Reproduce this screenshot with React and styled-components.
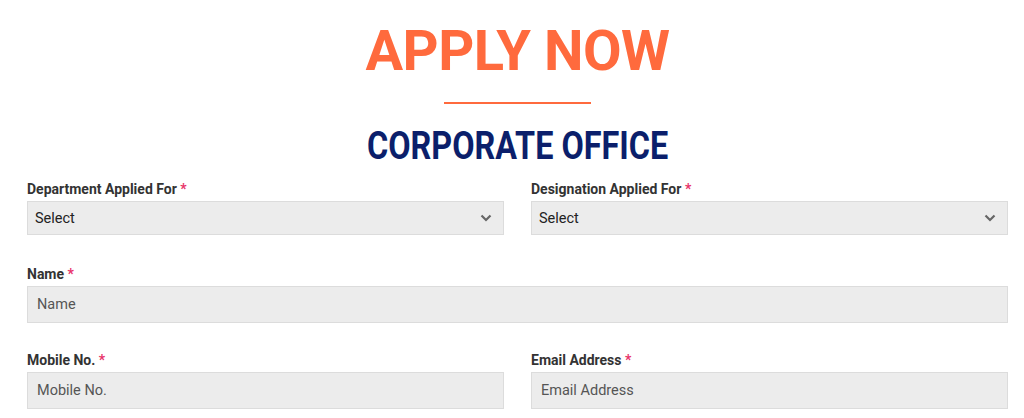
import React from "react";
import styled, { createGlobalStyle } from "styled-components";

const Global = createGlobalStyle`
  html, body { margin: 0; padding: 0; background: #fff; }
  body { font-family: Roboto, "Liberation Sans", Arial, sans-serif; }
  * { box-sizing: border-box; }
`;

const Page = styled.div`
  padding: 23px 16px 0 27px;
`;

const Header = styled.header`
  display: flex;
  flex-direction: column;
  align-items: center;
`;

const Title = styled.h1`
  margin: 0;
  font-family: Roboto, sans-serif;
  font-weight: 700;
  font-size: 56px;
  line-height: 56px;
  color: #ff6a3d;
  letter-spacing: -0.5px;
`;

const Divider = styled.div`
  width: 147px;
  height: 2px;
  background: #ff6a3d;
  margin: 23px 0 22px;
`;

const Subtitle = styled.h2`
  margin: 0;
  font-family: Roboto, sans-serif;
  font-weight: 700;
  font-size: 39.5px;
  line-height: 40px;
  color: #0b1f6b;
  transform: scaleX(0.82);
  white-space: nowrap;
`;

const Form = styled.form`
  display: grid;
  grid-template-columns: 1fr 1fr;
  column-gap: 27px;
  margin-top: 15px;
`;

const Field = styled.div`
  grid-column: ${(p) => (p.$full ? "1 / -1" : "auto")};
  display: flex;
  flex-direction: column;
  margin-bottom: ${(p) => p.$gap || 0}px;
`;

const Label = styled.label`
  font-size: 14px;
  font-weight: 700;
  color: #333;
  line-height: 16px;
  margin-bottom: 4px;
`;

const Req = styled.span`
  color: #e8336a;
`;

const SelectBox = styled.div`
  position: relative;
  height: 34px;
  background: #ececec;
  border: 1px solid #dcdcdc;
  display: flex;
  align-items: center;
  padding: 0 7px;
  font-size: 14.5px;
  color: #222;
`;

const Chevron = styled.svg`
  position: absolute;
  right: 11px;
  top: 50%;
  transform: translateY(-50%);
`;

const Input = styled.div`
  height: 37px;
  background: #ececec;
  border: 1px solid #dcdcdc;
  display: flex;
  align-items: center;
  padding: 0 9px;
  font-size: 14.5px;
  color: #555;
`;

function Select({ text }) {
  return (
    <SelectBox>
      {text}
      <Chevron width="12" height="8" viewBox="0 0 12 8">
        <path d="M1.5 1.5 L6 6 L10.5 1.5" fill="none" stroke="#666" strokeWidth="2.2" />
      </Chevron>
    </SelectBox>
  );
}

export default function App() {
  return (
    <>
      <Global />
      <Page>
        <Header>
          <Title>APPLY NOW</Title>
          <Divider />
          <Subtitle>CORPORATE OFFICE</Subtitle>
        </Header>
        <Form>
          <Field $gap={31}>
            <Label>Department Applied For <Req>*</Req></Label>
            <Select text="Select" />
          </Field>
          <Field $gap={31}>
            <Label>Designation Applied For <Req>*</Req></Label>
            <Select text="Select" />
          </Field>
          <Field $full $gap={29}>
            <Label>Name <Req>*</Req></Label>
            <Input>Name</Input>
          </Field>
          <Field>
            <Label>Mobile No. <Req>*</Req></Label>
            <Input>Mobile No.</Input>
          </Field>
          <Field>
            <Label>Email Address <Req>*</Req></Label>
            <Input>Email Address</Input>
          </Field>
        </Form>
      </Page>
    </>
  );
}
